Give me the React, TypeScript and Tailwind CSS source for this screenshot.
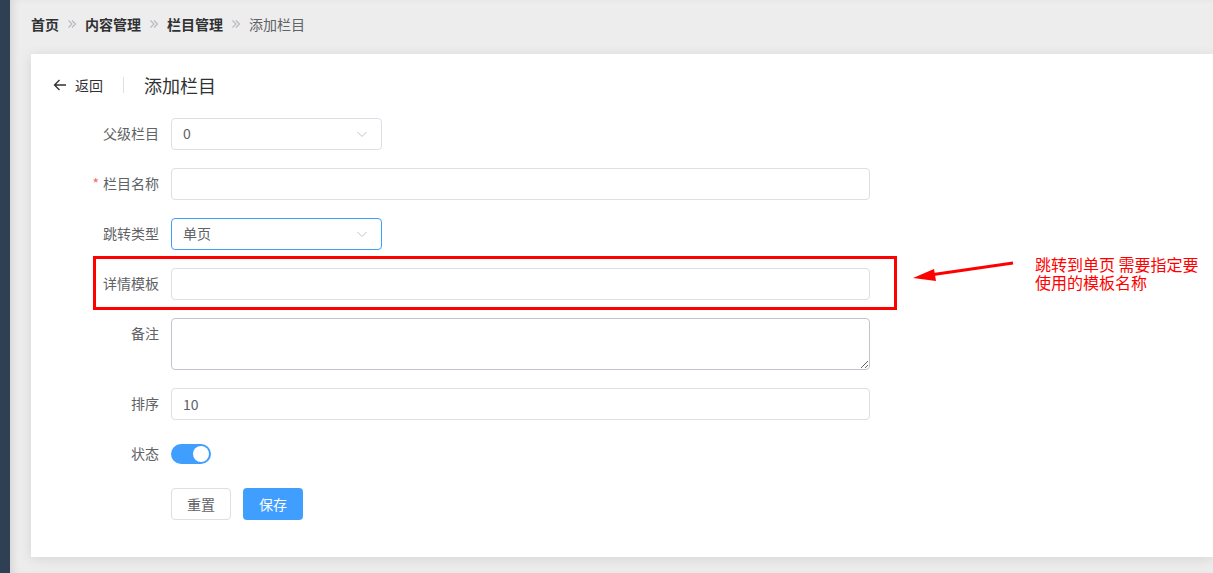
import React, { useState } from 'react';

const FONT = '"Noto Sans CJK SC", "Noto Sans", "Liberation Sans", sans-serif';

const Sep: React.FC = () => (
    <svg width="10" height="10" viewBox="0 0 10 10" className="mx-[8px]">
        <path d="M1.5 1.5 L5 5 L1.5 8.5 M5 1.5 L8.5 5 L5 8.5" fill="none" stroke="#b4b8bf" strokeWidth="1.1" />
    </svg>
);

const Chevron: React.FC = () => (
    <svg width="12" height="12" viewBox="0 0 12 12" className="absolute right-[14px] top-[10px]">
        <path d="M1.5 4 L6 8.5 L10.5 4" fill="none" stroke="#c0c4cc" strokeWidth="1" />
    </svg>
);

const FormRow: React.FC<{ label: string; required?: boolean; children: React.ReactNode }> = ({ label, required, children }) => (
    <div className="flex mb-[18px] h-8">
        <label className="w-[120px] shrink-0 pr-3 text-right text-sm leading-[30px] text-[#606266]">
            {required && <span className="text-[#f56c6c] mr-[4px]">*</span>}
            {label}
        </label>
        <div className="flex items-center">{children}</div>
    </div>
);

const inputCls =
    'h-8 w-[699px] rounded-[4px] border border-[#dcdfe6] bg-white px-[11px] text-sm text-[#606266] outline-none';

export default function App() {
    const [status, setStatus] = useState(true);

    return (
        <div className="flex h-[573px] w-full overflow-hidden" style={{ fontFamily: FONT }}>
            <aside className="w-[10px] shrink-0 bg-[#2f3f54]" />
            <main className="flex-1 bg-[#ededed] shadow-[inset_6px_0_8px_-4px_rgba(0,0,0,0.12)]">
                <nav className="flex items-center h-[54px] pl-[21px] pb-[6px] text-sm leading-[18px]">
                    <span className="font-bold text-[#303133]">首页</span>
                    <Sep />
                    <span className="font-bold text-[#303133]">内容管理</span>
                    <Sep />
                    <span className="font-bold text-[#303133]">栏目管理</span>
                    <Sep />
                    <span className="text-[#606266]">添加栏目</span>
                </nav>

                <section className="relative ml-[21px] h-[503px] bg-white p-5 shadow-[0_2px_12px_0_rgba(0,0,0,0.1)]">
                    <div className="flex items-center h-6 pb-[2px]">
                        <div className="flex items-center pl-[2px] text-sm text-[#303133]">
                            <svg width="14" height="14" viewBox="0 0 14 14" className="mr-[8px]">
                                <path d="M13 7 H1.5 M6.5 2 L1.5 7 L6.5 12" fill="none" stroke="#303133" strokeWidth="1.3" />
                            </svg>
                            返回
                        </div>
                        <div className="mx-5 h-4 w-px bg-[#dcdfe6]" />
                        <h1 className="text-lg text-[#303133]">添加栏目</h1>
                    </div>

                    <form className="mt-5">
                        <FormRow label="父级栏目">
                            <div className="relative">
                                <div className="h-8 w-[211px] rounded-[4px] border border-[#dcdfe6] px-[11px] text-sm leading-[28px] text-[#606266]">0</div>
                                <Chevron />
                            </div>
                        </FormRow>
                        <FormRow label="栏目名称" required>
                            <input className={inputCls} />
                        </FormRow>
                        <FormRow label="跳转类型">
                            <div className="relative">
                                <div className="h-8 w-[211px] rounded-[4px] border border-[#409eff] px-[11px] text-sm leading-[28px] text-[#606266]">单页</div>
                                <Chevron />
                            </div>
                        </FormRow>
                        <FormRow label="详情模板">
                            <input className={inputCls} />
                        </FormRow>
                        <div className="flex mb-[18px]">
                            <label className="w-[120px] shrink-0 pr-3 text-right text-sm leading-[30px] text-[#606266]">备注</label>
                            <textarea
                                className="block h-[52px] w-[699px] resize-y rounded-[4px] border border-[#c0c4cc] px-[11px] py-[5px] text-sm text-[#606266] outline-none"
                            />
                        </div>
                        <FormRow label="排序">
                            <input className={inputCls} defaultValue="10" />
                        </FormRow>
                        <FormRow label="状态">
                            <button
                                type="button"
                                onClick={() => setStatus(!status)}
                                className={`relative h-5 w-10 rounded-full ${status ? 'bg-[#409eff]' : 'bg-[#dcdfe6]'}`}
                            >
                                <span className={`absolute top-[2px] h-4 w-4 rounded-full bg-white ${status ? 'left-[22px]' : 'left-[2px]'}`} />
                            </button>
                        </FormRow>
                        <div className="flex pl-[120px] gap-3">
                            <button type="button" className="h-8 w-[60px] rounded-[4px] border border-[#dcdfe6] bg-white text-sm leading-[28px] text-[#606266]">重置</button>
                            <button type="button" className="h-8 w-[60px] rounded-[4px] bg-[#409eff] text-sm leading-[28px] text-white">保存</button>
                        </div>
                    </form>

                    {/* annotation */}
                    <div className="absolute left-[62px] top-[202px] h-[54px] w-[804px] border-[3px] border-[#ff0000]" />
                    <svg width="110" height="30" viewBox="0 0 110 30" className="absolute left-[879px] top-[202px]">
                        <line x1="103" y1="7" x2="20" y2="19" stroke="#ff0000" strokeWidth="3" />
                        <polygon points="3,22 24,13 26,25" fill="#ff0000" />
                    </svg>
                    <div className="absolute left-[1004px] top-[201px] text-base leading-[18px] text-[#ff0000]">
                        <div className="whitespace-nowrap">跳转到单页 需要指定要</div>
                        <div className="whitespace-nowrap">使用的模板名称</div>
                    </div>
                </section>
            </main>
        </div>
    );
}
